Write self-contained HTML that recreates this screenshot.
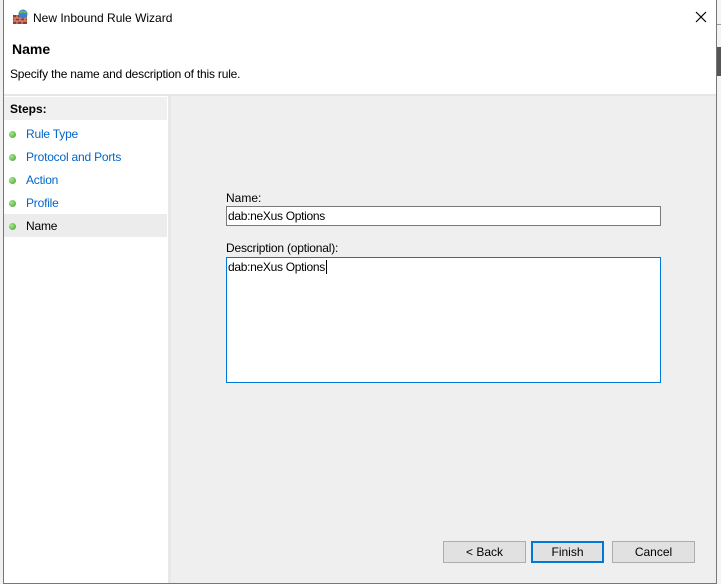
<!DOCTYPE html>
<html><head><style>
*{margin:0;padding:0;box-sizing:border-box}
body{width:721px;height:587px;overflow:hidden;background:#f0f0f0;font-family:"Liberation Sans",sans-serif;font-size:12px;position:relative;color:#000}
.a{position:absolute}
.step{position:absolute;left:26px;color:#0066cc;font-size:12px;letter-spacing:-0.2px}
.dot{position:absolute;left:9px;width:7px;height:7px;border-radius:50%;background:radial-gradient(circle at 35% 35%,#a6e88a,#3fa02a)}
.btn{position:absolute;top:541px;height:22px;background:#e1e1e1;border:1px solid #adadad;text-align:center;line-height:20px}
</style></head><body>
<div class="a" style="left:717px;top:0;width:4px;height:587px;background:#f4f4f4"></div>
<div class="a" style="left:717px;top:24px;width:4px;height:1px;background:#999"></div>
<div class="a" style="left:717px;top:47px;width:4px;height:29px;background:#555"></div>
<div class="a" style="left:0;top:584px;width:721px;height:3px;background:#fff"></div>
<div class="a" style="left:3px;top:0;width:714px;height:584px;border:1px solid #777;border-top:none;background:#fff"></div>
<svg class="a" style="left:12px;top:9px" width="18" height="16" viewBox="0 0 18 16">
  <rect x="1" y="6" width="14" height="9" fill="#9a3b2a"/>
  <path d="M1 9h14M1 12h14M5 6v3M10 6v3M3 9v3M8 9v3M13 9v3M5 12v3M10 12v3" stroke="#d9a08a" stroke-width="1"/>
  <circle cx="11" cy="5" r="4.5" fill="#3a7fd0"/><path d="M8 4q3-3 6 0" stroke="#6bc04a" stroke-width="2" fill="none"/>
</svg>
<div class="a" style="left:33px;top:11px">New Inbound Rule Wizard</div>
<svg class="a" style="left:695px;top:11px" width="12" height="12"><path d="M1 1L11 11M11 1L1 11" stroke="#000" stroke-width="1.2"/></svg>
<div class="a" style="left:12px;top:41px;font-size:14px;font-weight:bold">Name</div>
<div class="a" style="left:10px;top:67px;letter-spacing:-0.2px">Specify the name and description of this rule.</div>
<div class="a" style="left:4px;top:94px;width:712px;height:2px;background:#e6e6e6"></div>
<div class="a" style="left:4px;top:96px;width:164px;height:487px;background:#fff"></div>
<div class="a" style="left:4px;top:97px;width:163px;height:23px;background:#f0f0f0"></div>
<div class="a" style="left:10px;top:102px;font-weight:bold">Steps:</div>
<div class="a" style="left:168px;top:96px;width:3px;height:487px;background:#e8e8e8"></div>
<div class="a" style="left:171px;top:96px;width:545px;height:487px;background:#efefef"></div>
<div class="dot" style="top:131px"></div><div class="step" style="top:127px">Rule Type</div>
<div class="dot" style="top:154px"></div><div class="step" style="top:150px">Protocol and Ports</div>
<div class="dot" style="top:177px"></div><div class="step" style="top:173px">Action</div>
<div class="dot" style="top:200px"></div><div class="step" style="top:196px">Profile</div>
<div class="a" style="left:4px;top:214px;width:163px;height:23px;background:#ececec"></div>
<div class="dot" style="top:223px"></div><div class="step" style="top:219px;color:#000">Name</div>
<div class="a" style="left:226px;top:191px">Name:</div>
<div class="a" style="left:226px;top:206px;width:435px;height:20px;background:#fff;border:1px solid #7a7a7a;padding:2px 1px;line-height:14px;letter-spacing:-0.3px">dab:neXus Options</div>
<div class="a" style="left:226px;top:241px;letter-spacing:-0.2px">Description (optional):</div>
<div class="a" style="left:226px;top:257px;width:435px;height:126px;background:#fff;border:1px solid #0078d7;padding:2px 1px;line-height:14px;letter-spacing:-0.3px">dab:neXus Options<span style="border-left:1px solid #000;margin-left:1px"></span></div>
<div class="btn" style="left:443px;width:83px">&lt; Back</div>
<div class="btn" style="left:531px;width:73px;border:2px solid #0078d7;line-height:18px">Finish</div>
<div class="btn" style="left:612px;width:83px">Cancel</div>
</body></html>
